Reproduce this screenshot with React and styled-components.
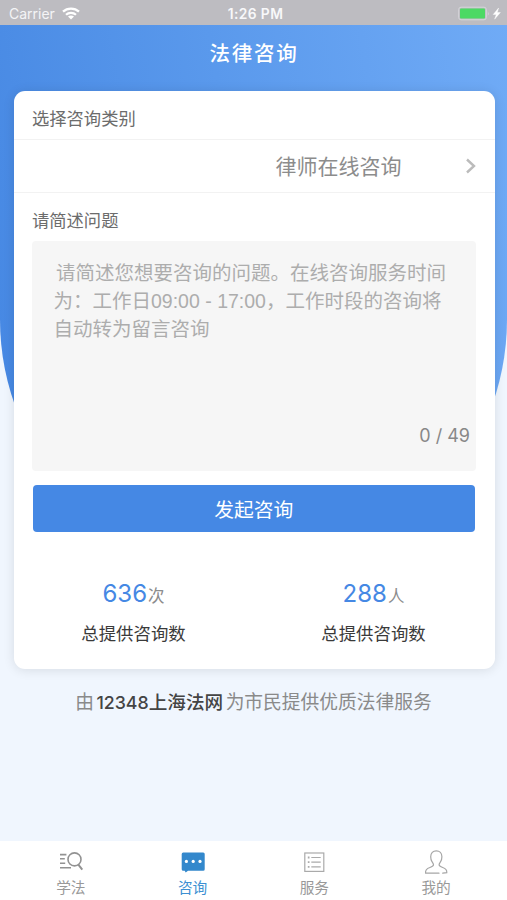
import React from 'react';
import styled, { createGlobalStyle } from 'styled-components';

const GlobalStyle = createGlobalStyle`
  * {
    box-sizing: border-box;
  }
  body {
    margin: 0;
    background-color: #f0f6fe;
    font-family: Inter, "Noto Sans CJK SC", sans-serif;
  }
`;

const Screen = styled.div`
  position: relative;
  display: flex;
  flex-direction: column;
  width: 507px;
  height: 900px;
  overflow: hidden;
  background-color: #f0f6fe;
`;

const Backdrop = styled.div`
  position: absolute;
  top: 0;
  left: 0;
  width: 100%;
  height: 573px;
  border-radius: 0 0 253.5px 253.5px;
  background-image: linear-gradient(80deg, #4486e2 0%, #5a99ec 50%, #70abf6 100%);
`;

const StatusBar = styled.div`
  position: relative;
  display: grid;
  grid-template-columns: 1fr auto 1fr;
  align-items: center;
  height: 25px;
  padding: 2px 6px 0 9px;
  background-color: #bdbcc1;
  color: #fff;
  line-height: 22px;
`;

const Carrier = styled.div`
  display: flex;
  align-items: center;
  gap: 7px;
  color: #f4f4f6;
  font-size: 14px;
`;

const Time = styled.span`
  margin-left: 1px;
  color: #f8f8fa;
  font-size: 13.8px;
  font-weight: 600;
  letter-spacing: 0.4px;
`;

const Power = styled.div`
  display: flex;
  justify-content: flex-end;
  align-items: center;
`;

const Header = styled.header`
  position: relative;
  height: 66px;
  padding-left: 1px;
  color: #fff;
  font-size: 20.5px;
  font-weight: 500;
  line-height: 57px;
  letter-spacing: 1.7px;
  text-align: center;
`;

const Card = styled.main`
  position: relative;
  display: flex;
  flex-direction: column;
  height: 578px;
  margin: 0 12.5px 0 13.5px;
  border-radius: 11px;
  background-color: #fff;
  box-shadow: 0 1px 12px rgba(0, 0, 0, 0.11);
`;

const Label = styled.div`
  height: ${(props) => props.$height}px;
  padding: ${(props) => props.$drop}px 0 0 18.5px;
  color: #6c6c6c;
  font-size: 17.3px;
  line-height: 48px;
`;

const Select = styled.div`
  display: flex;
  justify-content: flex-end;
  align-items: center;
  height: 54px;
  padding-right: 18px;
  border-top: 1px solid #f2f2f2;
  border-bottom: 1px solid #f2f2f2;
  color: #8c8c8c;
  font-size: 21px;
  line-height: 52px;
`;

const Category = styled.span`
  padding-top: 2px;
  line-height: 50px;
`;

const Chevron = styled.svg`
  margin-left: 63px;
`;

const Question = styled.div`
  display: flex;
  flex-direction: column;
  justify-content: space-between;
  height: 230px;
  margin: -4px 18.5px 0;
  padding: 18px 6px 21px 21.5px;
  border-radius: 4px;
  background-color: #f6f6f6;
`;

const Placeholder = styled.div`
  color: #adadad;
  font-family: "Liberation Sans", "Noto Sans CJK SC", sans-serif;
  font-size: 19.5px;
  line-height: 28px;
  text-indent: 2.5px;
  white-space: nowrap;
`;

const Counter = styled.div`
  color: #888;
  font-size: 18px;
  line-height: 28px;
  text-align: right;
`;

const Submit = styled.button`
  height: 47px;
  margin: 14px 20px 0 19.5px;
  padding: 3px 0 0;
  border: 0;
  border-radius: 4px;
  background-color: #4588e4;
  color: #fff;
  font-family: inherit;
  font-size: 19.8px;
  line-height: 44px;
`;

const Stats = styled.div`
  display: grid;
  grid-template-columns: 1fr 1fr;
  padding: 43px 1px 0 0;
`;

const Stat = styled.div`
  display: flex;
  flex-direction: column;
  align-items: center;
`;

const Amount = styled.div`
  display: flex;
  align-items: baseline;
  height: 37px;
  padding-top: 1px;
  color: #8c8c8c;
  font-size: 16.5px;
  line-height: 36px;
`;

const Digits = styled.span`
  margin-right: 1px;
  color: #4588e4;
  font-size: 24px;
`;

const Caption = styled.div`
  color: #3a3a3a;
  font-size: 17.4px;
  line-height: 44px;
`;

const Credit = styled.div`
  position: relative;
  display: flex;
  justify-content: center;
  align-items: baseline;
  padding-top: 19px;
  color: #8a8a8a;
  font-size: 18.75px;
  line-height: 28px;
`;

const Site = styled.span`
  margin: 0 2.5px;
  color: #444;
  font-weight: 500;
  font-size: 18.6px;
`;

const SiteNumber = styled.span`
  font-size: 17.8px;
`;

const TabBar = styled.nav`
  position: relative;
  display: grid;
  grid-template-columns: repeat(4, 1fr);
  height: 59px;
  margin-top: auto;
  padding: 0 10px;
  background-color: #fff;
`;

const Tab = styled.div`
  display: flex;
  flex-direction: column;
  align-items: center;
  padding-top: 7px;
  color: ${(props) => (props.$active ? '#3d90d2' : '#999')};
  font-size: 14.7px;
  line-height: 22px;

  svg {
    flex: none;
    margin-bottom: 1px;
  }
`;

const WifiIcon = () => (
  <svg width="18" height="13" viewBox="0 0 18 13" fill="none">
    <path d="M1 4.7C5.4.6 12.6.6 17 4.7" stroke="#fff" strokeWidth="2.3" />
    <path d="M4 7.8c2.8-2.7 7.2-2.7 10 0" stroke="#fff" strokeWidth="2.2" />
    <path d="M9 12.6 6 9.6c1.7-1.4 4.3-1.4 6 0z" fill="#fff" />
  </svg>
);

const BatteryIcon = () => (
  <svg width="43" height="15" viewBox="0 0 43 15">
    <rect x="0.7" y="1.2" width="27.6" height="12.6" rx="2.3" fill="none" stroke="#d6d6da" />
    <rect x="2" y="2.5" width="25" height="10" rx="1" fill="#4cd964" />
    <path d="M29.8 5.2q1.8 2.3 0 4.6z" fill="#d6d6da" />
    <path d="m40.6 2-5.4 6.5h3.1l-1.7 4.7 5.8-6.7h-3.100z" fill="#fff" stroke="#fff" strokeWidth="0.4" />
  </svg>
);

const LearnIcon = () => (
  <svg width="26" height="28" viewBox="0 0 26 28" fill="none" stroke="#929292" strokeWidth="1.6">
    <path d="M2 6.6h6.4M2 10.8h4.8M2 15.2h5.2M2 19.7h11" />
    <circle cx="16.5" cy="11.4" r="6.5" />
    <path d="m20.3 16.7 4 5" strokeWidth="2" />
  </svg>
);

const ChatIcon = () => (
  <svg width="26" height="28" viewBox="0 0 26 28">
    <path
      d="M3.2 4.5h20a1.5 1.5 0 0 1 1.5 1.5v15.2a1.5 1.5 0 0 1-1.5 1.5H8L5.7 24.4l-1-1.7H3.2a1.5 1.5 0 0 1-1.5-1.5V6a1.5 1.5 0 0 1 1.5-1.5z"
      fill="#3388cc"
    />
    <circle cx="6.4" cy="13.4" r="1.6" fill="#fff" />
    <circle cx="13.2" cy="13.4" r="1.6" fill="#fff" />
    <circle cx="20" cy="13.4" r="1.6" fill="#fff" />
  </svg>
);

const ServiceIcon = () => (
  <svg width="26" height="28" viewBox="0 0 26 28" fill="none" stroke="#aaa" strokeWidth="1.2">
    <rect x="3.8" y="5" width="19" height="18.4" />
    <path d="M10.3 9.5h9.4M10.3 14.2h9.4M10.3 18.9h9.4" />
    <path d="M6.8 9.5h1.7M6.8 14.2h1.7M6.8 18.9h1.7" strokeWidth="1.8" />
  </svg>
);

const ProfileIcon = () => (
  <svg width="26" height="28" viewBox="0 0 26 28" fill="none" stroke="#a6a6a6" strokeWidth="1.2" strokeLinecap="round">
    <path d="M16 25.2H2.6c-.5-3.3 1.500-4.800 4.300-5.700 2.400-.8 3.600-1.300 3.600-2.700 0-1.200-.7-1.900-1.500-3.100-1-1.600-1.300-3-1.300-4.900 0-3.600 2.300-6 5.600-6s5.600 2.400 5.600 6c0 1.900-.3 3.300-1.300 4.900-.8 1.200-1.500 1.900-1.500 3.100 0 1.400 1.200 1.900 3.600 2.700 2.800.9 4.300 2.400 4.100 5.200l-4.100.5" />
  </svg>
);

const stats = [
  { value: '636', unit: '次', caption: '总提供咨询数' },
  { value: '288', unit: '人', caption: '总提供咨询数' },
];

const tabs = [
  { name: '学法', Icon: LearnIcon },
  { name: '咨询', Icon: ChatIcon, active: true },
  { name: '服务', Icon: ServiceIcon },
  { name: '我的', Icon: ProfileIcon },
];

const App = () => (
  <>
    <GlobalStyle />
    <Screen>
      <Backdrop />
      <StatusBar>
        <Carrier>
          Carrier
          <WifiIcon />
        </Carrier>
        <Time>1:26 PM</Time>
        <Power>
          <BatteryIcon />
        </Power>
      </StatusBar>
      <Header>法律咨询</Header>
      <Card>
        <Label $height={48} $drop={4}>
          选择咨询类别
        </Label>
        <Select>
          <Category>律师在线咨询</Category>
          <Chevron width="12" height="18" viewBox="0 0 12 18" fill="none" stroke="#bbb" strokeWidth="2.4">
            <path d="m2 2.5 7 6.5-7 6.5" />
          </Chevron>
        </Select>
        <Label $height={52} $drop={4}>
          请简述问题
        </Label>
        <Question>
          <Placeholder>
            请简述您想要咨询的问题。在线咨询服务时间
            <br />
            为：工作日09:00 - 17:00，工作时段的咨询将
            <br />
            自动转为留言咨询
          </Placeholder>
          <Counter>0 / 49</Counter>
        </Question>
        <Submit>发起咨询</Submit>
        <Stats>
          {stats.map(({ value, unit, caption }) => (
            <Stat key={value}>
              <Amount>
                <Digits>{value}</Digits>
                {unit}
              </Amount>
              <Caption>{caption}</Caption>
            </Stat>
          ))}
        </Stats>
      </Card>
      <Credit>
        由
        <Site>
          <SiteNumber>12348</SiteNumber>上海法网
        </Site>
        为市民提供优质法律服务
      </Credit>
      <TabBar>
        {tabs.map(({ name, Icon, active }) => (
          <Tab key={name} $active={active}>
            <Icon />
            {name}
          </Tab>
        ))}
      </TabBar>
    </Screen>
  </>
);

export default App;
